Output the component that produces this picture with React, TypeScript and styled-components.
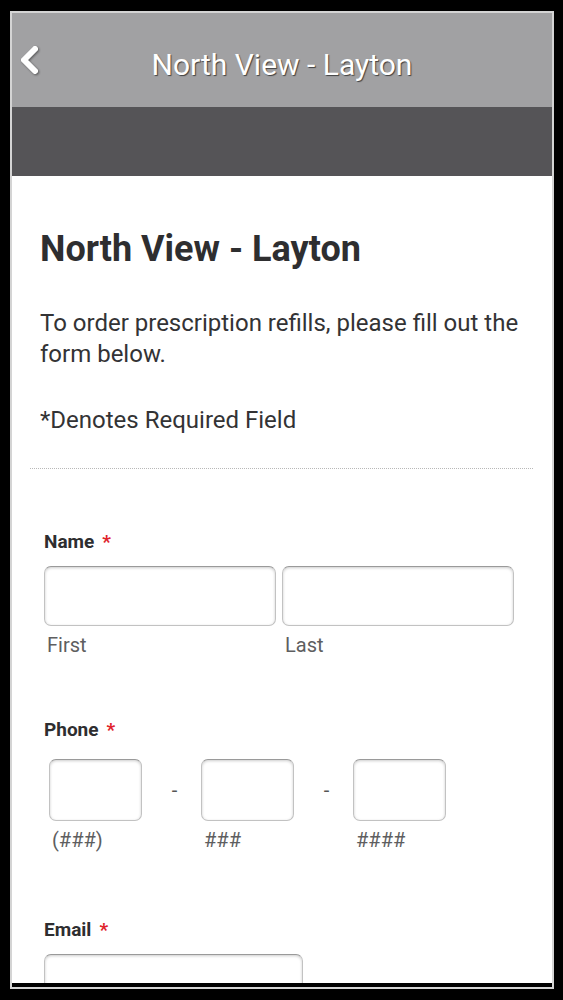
import React from 'react';
import styled, { createGlobalStyle } from 'styled-components';

const GlobalStyle = createGlobalStyle`
  html, body {
    margin: 0;
    padding: 0;
    background: #000;
  }
  * {
    box-sizing: border-box;
  }
`;

const Page = styled.div`
  width: 563px;
  height: 1000px;
  background: #000;
  padding: 11px 9px 0 10px;
  font-family: Roboto, 'Liberation Sans', sans-serif;
`;

const Frame = styled.div`
  width: 544px;
  height: 978px;
  border: 2px solid #d4d4d4;
  display: flex;
  flex-direction: column;
  overflow: hidden;
`;

const TopBar = styled.header`
  height: 94px;
  flex-shrink: 0;
  background: #a1a1a3;
  display: grid;
  grid-template-columns: 48px 1fr 48px;
  align-items: center;
`;

const BackButton = styled.button`
  background: none;
  border: none;
  padding: 0 0 0 8px;
  height: 30px;
  display: flex;
  align-items: center;
  cursor: pointer;

  svg {
    filter: drop-shadow(1px 1px 1px rgba(0, 0, 0, 0.45));
  }
`;

const TopTitle = styled.h1`
  margin: 0;
  padding-top: 10px;
  text-align: center;
  font-size: 30px;
  line-height: 30px;
  font-weight: 400;
  color: #fff;
  text-shadow: 1px 1px 1px rgba(0, 0, 0, 0.6);
  white-space: nowrap;
`;

const SubBar = styled.div`
  height: 69px;
  flex-shrink: 0;
  background: #555457;
`;

const Content = styled.main`
  flex: 1;
  background: #fff;
  overflow: hidden;
  padding-top: 52px;
`;

const Intro = styled.section`
  padding: 0 28px;
  color: #333335;
`;

const Heading = styled.h2`
  margin: 0;
  font-size: 36px;
  line-height: 42px;
  font-weight: 700;
  color: #2e2e30;
`;

const Text = styled.p<{ $gap: number }>`
  margin: ${p => p.$gap}px 0 0;
  font-size: 24px;
  line-height: 31px;
  font-weight: 400;
`;

const Divider = styled.hr`
  margin: 32px 19px 0 18px;
  border: none;
  border-top: 1px dotted #b8b8b8;
  height: 0;
`;

const Form = styled.form`
  padding: 0 38px 0 32px;
`;

const Field = styled.div`
  margin-top: 61px;
`;

const Label = styled.label`
  display: block;
  font-size: 19px;
  line-height: 24px;
  font-weight: 700;
  color: #2e2e30;
  margin-bottom: 12px;
`;

const Required = styled.span`
  color: #e0232b;
  margin-left: 8px;
`;

const NameRow = styled.div`
  display: grid;
  grid-template-columns: 1fr 1fr;
  column-gap: 6px;
`;

const Input = styled.input<{ $width?: number; $height?: number }>`
  display: block;
  width: ${p => (p.$width ? `${p.$width}px` : '100%')};
  height: ${p => p.$height ?? 60}px;
  border: 1px solid #c2c2c2;
  border-top-color: #9a9a9a;
  border-radius: 7px;
  box-shadow: inset 0 1px 3px rgba(0, 0, 0, 0.2);
  background: #fff;
  font-size: 20px;
  padding: 0 8px;
  outline: none;
`;

const SubLabel = styled.span`
  display: block;
  margin-top: 7px;
  padding-left: 3px;
  font-size: 20px;
  line-height: 24px;
  color: #5e5e60;
`;

const PhoneRow = styled.div`
  display: flex;
  align-items: flex-start;
  padding: 5px 0 5px 5px;
`;

const PhonePart = styled.div`
  width: 93px;
`;

const Dash = styled.span`
  width: 59px;
  height: 62px;
  padding-left: 6px;
  display: flex;
  align-items: center;
  justify-content: center;
  font-size: 20px;
  color: #555;
`;

const BottomStrip = styled.div`
  height: 4px;
  flex-shrink: 0;
  background: #000;
`;

const phoneParts = ['(###)', '###', '####'];

export default function App() {
  return (
    <>
      <GlobalStyle />
      <Page>
        <Frame>
          <TopBar>
            <BackButton aria-label="Back">
              <svg width="22" height="30" viewBox="0 0 22 30">
                <polyline
                  points="15,4 4,15 15,26"
                  fill="none"
                  stroke="#fff"
                  strokeWidth="6"
                  strokeLinecap="round"
                  strokeLinejoin="round"
                />
              </svg>
            </BackButton>
            <TopTitle>North View - Layton</TopTitle>
            <span />
          </TopBar>
          <SubBar />
          <Content>
            <Intro>
              <Heading>North View - Layton</Heading>
              <Text $gap={38}>
                To order prescription refills, please fill out the form below.
              </Text>
              <Text $gap={35}>*Denotes Required Field</Text>
            </Intro>
            <Divider />
            <Form onSubmit={e => e.preventDefault()}>
              <Field>
                <Label>
                  Name<Required>*</Required>
                </Label>
                <NameRow>
                  <div>
                    <Input type="text" />
                    <SubLabel>First</SubLabel>
                  </div>
                  <div>
                    <Input type="text" />
                    <SubLabel>Last</SubLabel>
                  </div>
                </NameRow>
              </Field>
              <Field>
                <Label>
                  Phone<Required>*</Required>
                </Label>
                <PhoneRow>
                  {phoneParts.map((part, i) => (
                    <React.Fragment key={part}>
                      {i > 0 && <Dash>-</Dash>}
                      <PhonePart>
                        <Input type="tel" $height={62} />
                        <SubLabel>{part}</SubLabel>
                      </PhonePart>
                    </React.Fragment>
                  ))}
                </PhoneRow>
              </Field>
              <Field>
                <Label>
                  Email<Required>*</Required>
                </Label>
                <Input type="email" $width={259} />
              </Field>
            </Form>
          </Content>
          <BottomStrip />
        </Frame>
      </Page>
    </>
  );
}
